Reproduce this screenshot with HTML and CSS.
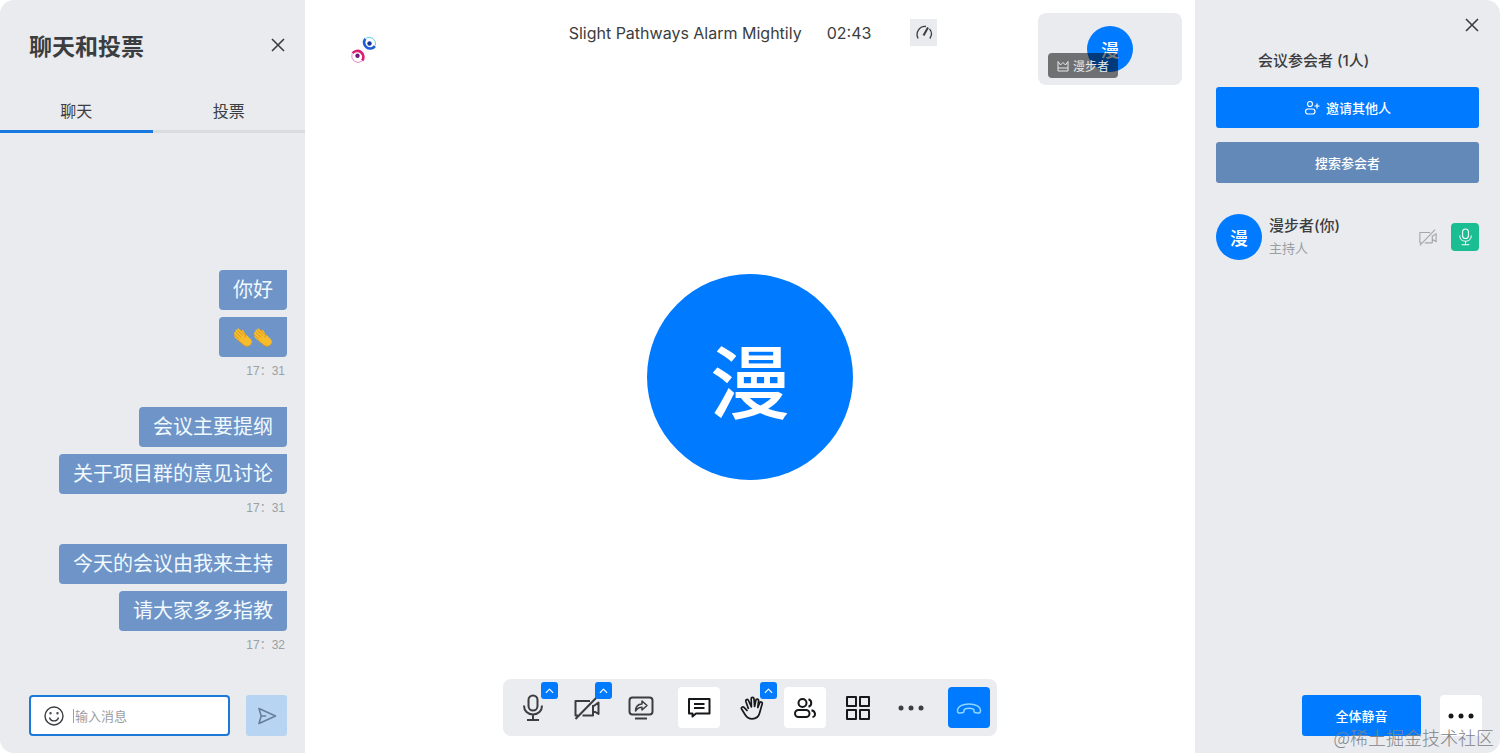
FILE: index.html
```html
<!DOCTYPE html>
<html lang="zh-CN">
<head>
<meta charset="utf-8">
<meta name="viewport" content="width=device-width, initial-scale=1">
<title>Slight Pathways Alarm Mightily</title>
<link rel="stylesheet" href="styles.css">
</head>
<body>
<svg class="defs" aria-hidden="true">
  <symbol id="close" viewBox="0 0 14 14"><path d="M1 1l12 12M13 1L1 13"/></symbol>
  <symbol id="chevron" viewBox="0 0 10 6"><path d="M1 5l4-4 4 4"/></symbol>
  <symbol id="dots" viewBox="0 0 26 6"><circle cx="3" cy="3" r="2.5"/><circle cx="13" cy="3" r="2.5"/><circle cx="23" cy="3" r="2.5"/></symbol>
  <symbol id="mic" viewBox="0 0 20 28"><rect x="5.500" y="1.500" width="9" height="15" rx="4.500"/><path d="M1 11.500c0 5.500 3.800 9 9 9s9-3.500 9-9M10 20.500v5.500M4 26h12"/></symbol>
  <symbol id="camera-off" viewBox="0 0 28 24"><path d="M17 5H2.500v14.500H5M9.500 19.500H20V9M20 10.500l5.500-4V18L20 14.500M2.500 23L24 1"/></symbol>
  <symbol id="clap" viewBox="0 0 20 20">
    <path d="M1.500 7.500c-1-2 .3-2.900 1.300-2.200C1.600 3.300 3 2.200 4.300 3.200 3.800 1.600 5.200.9 6.400 2l2 1.900c.2-1.400 1.700-1.300 2.300-.1l1.500 3 4.900 4.600c1.600 1.600 2.200 3.300 1.300 5l-1.700 2.200c-1.800 1.200-4.300.8-6-.6L3.500 12c-1.800-1.400-2.800-2.500-2-4.500z" fill="#f8bd2b"/>
    <path d="M2.800 5.300l5.400 5.200M4.300 3.200l5.600 5.400M6.400 2l5.200 5M1.500 8l4.700 4.400" fill="none" stroke="#cf8a19" stroke-width=".8"/>
    <path d="M12.200 6.800c.6 1.700.2 3-.6 3.900M5 13.300l5.700 4.700c1.700 1.400 4.200 1.800 6 .6" fill="none" stroke="#d8921c" stroke-width=".9"/>
  </symbol>
</svg>

<div class="app">
  <aside class="panel chat">
    <header class="chat-head">
      <h1>聊天和投票</h1>
      <button class="icon-btn" aria-label="关闭聊天"><svg class="line i14"><use href="#close"/></svg></button>
    </header>
    <nav class="tabs" role="tablist">
      <button class="tab active" role="tab" aria-selected="true">聊天</button>
      <button class="tab" role="tab" aria-selected="false">投票</button>
    </nav>
    <div class="messages">
      <section class="group">
        <p class="bubble">你好</p>
        <p class="bubble emoji" role="img" aria-label="鼓掌"><svg class="i20"><use href="#clap"/></svg><svg class="i20"><use href="#clap"/></svg></p>
        <time>17：31</time>
      </section>
      <section class="group">
        <p class="bubble">会议主要提纲</p>
        <p class="bubble">关于项目群的意见讨论</p>
        <time>17：31</time>
      </section>
      <section class="group">
        <p class="bubble">今天的会议由我来主持</p>
        <p class="bubble">请大家多多指教</p>
        <time>17：32</time>
      </section>
    </div>
    <form class="composer">
      <div class="field">
        <button type="button" class="icon-btn" aria-label="表情">
          <svg class="line i20" viewBox="0 0 20 20"><circle cx="10" cy="10" r="9"/><path d="M5.500 11.500c.7 2.300 2.300 3.400 4.500 3.400s3.800-1.100 4.500-3.400"/><circle cx="6.500" cy="7.300" r=".5"/><circle cx="13.500" cy="7.300" r=".5"/></svg>
        </button>
        <input type="text" placeholder="输入消息" aria-label="输入消息">
      </div>
      <button type="button" class="send" aria-label="发送">
        <svg class="line i20" viewBox="0 0 20 20"><path d="M2 2.500L18.500 10 2 17.500 4.200 10zM4.200 10h5"/></svg>
      </button>
    </form>
  </aside>

  <main class="stage">
    <header class="stage-head">
      <svg class="logo" viewBox="0 0 26 28" aria-label="标志" role="img">
        <g fill="none" stroke-width="2.600">
          <path d="M14.300 2.800a6 6 0 1 0 9.600 7.300" stroke="#1f5fd6"/>
          <path d="M14.800 2.200a6.500 6.500 0 0 1 9.600 7.200" stroke="#5fd0dc" stroke-width="1"/>
          <path d="M1.500 17.300a6 6 0 1 1 9.700 7.300" stroke="#d91f75"/>
          <path d="M1 18a6.500 6.500 0 0 0 9.700 7.400" stroke="#e58ac6" stroke-width="1"/>
        </g>
        <circle cx="18.500" cy="7.500" r="2.200" fill="#1838a0"/><circle cx="6.500" cy="19.800" r="2.200" fill="#71187f"/>
      </svg>
      <div class="meeting">
        <span>Slight Pathways Alarm Mightily</span>
        <time>02:43</time>
        <button class="gauge" aria-label="网络状态">
          <svg class="line i18" viewBox="0 0 18 18"><path d="M3.200 14.500A8 8 0 0 1 11 2.500M14.500 4.800a8 8 0 0 1 .3 9.700"/><path d="M8.500 11.500L13 3.500" class="needle"/></svg>
        </button>
      </div>
      <div class="self-view">
        <span class="avatar">漫</span>
        <span class="tag"><svg class="line i12" viewBox="0 0 12 12"><path d="M1 1.500v9.500h10V1.500L8.500 5 6 2.500 3.500 5zM1 8h10"/></svg>漫步者</span>
      </div>
    </header>
    <div class="avatar big">漫</div>
    <footer class="dock">
      <div class="toolbar">
        <div class="tools wide">
          <button class="tool" aria-label="麦克风"><svg class="line mic"><use href="#mic"/></svg><span class="badge"><svg class="line chev"><use href="#chevron"/></svg></span></button>
          <button class="tool" aria-label="摄像头"><svg class="line cam"><use href="#camera-off"/></svg><span class="badge"><svg class="line chev"><use href="#chevron"/></svg></span></button>
          <button class="tool" aria-label="共享屏幕"><svg class="line i26" viewBox="0 0 26 26"><rect x="1.500" y="2.500" width="23" height="17" rx="3"/><path d="M7 23.500h12"/><path class="thin" d="M7.500 16c.2-4.500 2-6.800 6.500-7V6l5 4.500-5 4.500v-2.700c-2.500 0-4.500.8-6.500 3.700z"/></svg></button>
        </div>
        <div class="tools">
          <button class="tool on" aria-label="聊天"><svg class="line i24" viewBox="0 0 24 24"><path d="M2 3h20.500v14.500H9L5.500 20.500v-3H2zM7 8h10.500M7 12h10.500"/></svg></button>
          <button class="tool dark" aria-label="举手"><svg class="line i24" viewBox="0 0 24 24"><path class="hand" d="M7.500 15L4 11.300c-1.200-1.200-3.200.2-2.400 1.700L5 18.500c1.600 2.800 3.900 4.300 7.200 4.300 4 0 6.500-2.100 7.400-5.800l2.600-9.200c.5-1.900-1.900-2.700-2.600-.9L17.800 11.500l.8-6.700c.2-2-2.400-2.400-2.800-.5L14.600 10.500 14 2.800c-.2-1.900-2.900-1.800-2.800.2l.2 8L8.500 4.500c-.8-1.800-3.200-.9-2.600 1L8.500 13"/></svg><span class="badge"><svg class="line chev"><use href="#chevron"/></svg></span></button>
          <button class="tool on" aria-label="参会者"><svg class="line i24" viewBox="0 0 24 24"><circle cx="9.500" cy="7" r="4"/><rect x="2" y="14" width="14.500" height="7" rx="3.500"/><path d="M15.500 3.200a4 4 0 0 1 0 7.600M18.500 14.300c4.500 1 4.500 6.500 1 6.700"/></svg></button>
          <button class="tool dark" aria-label="布局"><svg class="line i24" viewBox="0 0 24 24"><rect x="1" y="1" width="9" height="9"/><rect x="14" y="1" width="9" height="9"/><rect x="1" y="14" width="9" height="9"/><rect x="14" y="14" width="9" height="9"/></svg></button>
          <button class="tool" aria-label="更多"><svg class="dots"><use href="#dots"/></svg></button>
        </div>
        <button class="tool leave" aria-label="离开会议"><svg class="line i26" viewBox="0 0 26 26"><path d="M1.500 16c-.3-9.500 23.300-9.500 23 0 0 1.600-.9 2.200-2.300 2.100l-2.600-.3c-1.500-.2-1.800-1-1.800-3.400-3-1.400-6.600-1.400-9.600 0 0 2.400-.3 3.200-1.800 3.400l-2.600.3c-1.400.1-2.300-.5-2.300-2.100z"/></svg></button>
      </div>
    </footer>
  </main>

  <aside class="panel people">
    <div class="people-top"><button class="icon-btn" aria-label="关闭参会者"><svg class="line i14"><use href="#close"/></svg></button></div>
    <h2>会议参会者 (1人)</h2>
    <div class="actions">
      <button class="btn"><svg class="line i16" viewBox="0 0 16 16"><circle cx="6" cy="4" r="2.500"/><rect x="1.500" y="9" width="9.500" height="5" rx="2.500"/><path d="M13 3.500v5M10.500 6h5"/></svg>邀请其他人</button>
      <button class="btn search">搜索参会者</button>
    </div>
    <ul class="list">
      <li class="person">
        <span class="avatar">漫</span>
        <div class="who"><strong>漫步者(你)</strong><span>主持人</span></div>
        <svg class="line cam-state"><use href="#camera-off"/></svg>
        <button class="mic-state" aria-label="麦克风已开启"><svg class="line"><use href="#mic"/></svg></button>
      </li>
    </ul>
    <footer class="people-foot">
      <button class="btn mute">全体静音</button>
      <button class="tool on" aria-label="更多选项"><svg class="dots"><use href="#dots"/></svg></button>
    </footer>
    <span class="credit">@稀土掘金技术社区</span>
  </aside>
</div>
</body>
</html>
```
FILE: styles.css
```css
* { box-sizing: border-box; }

:root {
  --blue: #007aff;
  --panel: #e9ebef;
  --ink: #3b3d40;
  --muted: #9b9ea3;
}

body {
  margin: 0;
  background: #fff;
  color: var(--ink);
  font-family: Inter, "Noto Sans CJK SC", sans-serif;
}

h1, h2, p, ul { margin: 0; padding: 0; }

button, input { font: inherit; color: inherit; }

button {
  display: flex;
  align-items: center;
  justify-content: center;
  padding: 0;
  border: 0;
  background: none;
  cursor: pointer;
}

svg { display: block; flex: none; }
.defs { position: absolute; width: 0; height: 0; }

.line {
  fill: none;
  stroke: currentColor;
  stroke-width: 1.6px;
  stroke-linejoin: round;
}

.i12 { width: 12px; height: 12px; }
.i14 { width: 14px; height: 14px; }
.i16 { width: 16px; height: 16px; }
.i18 { width: 18px; height: 18px; }
.i20 { width: 20px; height: 20px; }
.i24 { width: 24px; height: 24px; }
.i26 { width: 26px; height: 26px; }

.app {
  display: grid;
  grid-template-columns: 305px 1fr 305px;
  min-height: 100vh;
}

.panel {
  display: flex;
  flex-direction: column;
  background: var(--panel);
}

/* Chat */
.chat { border-radius: 14px 0 0 14px; }

.chat-head {
  display: flex;
  align-items: center;
  justify-content: space-between;
  height: 90px;
  padding: 0 20px 0 29px;
}

.chat-head h1 { font-size: 23px; font-weight: 600; }

.tabs { display: flex; }

.tab {
  flex: 1;
  height: 43px;
  border-bottom: 3px solid #d9dbde;
  font-size: 16px;
}

.tab.active { border-color: #1778e0; }

.messages {
  display: flex;
  flex: 1;
  flex-direction: column;
  justify-content: flex-end;
  gap: 26px;
  padding: 20px 18px 40px;
}

.group {
  display: flex;
  flex-direction: column;
  align-items: flex-end;
}

.bubble {
  margin-bottom: 7px;
  padding: 0 14px;
  border-radius: 4px 0 4px 4px;
  background: #6f94c8;
  color: #f0faff;
  font-size: 20px;
  line-height: 41px;
  height: 40px;
}

.bubble:nth-last-child(2) { margin-bottom: 4px; }

.emoji { display: flex; align-items: center; }

.group time {
  padding-right: 2px;
  color: var(--muted);
  font-family: "Liberation Sans", "Noto Sans CJK SC", sans-serif;
  font-size: 12px;
  line-height: 20px;
}

.composer {
  display: flex;
  gap: 16px;
  padding: 0 18px 17px 29px;
}

.field {
  display: flex;
  flex: 1;
  align-items: center;
  gap: 9px;
  min-width: 0;
  height: 41px;
  padding: 0 13px;
  border: 2px solid #1b7ad9;
  border-radius: 4px;
  background: #fff;
}

.field .line { stroke-width: 1.4px; }

.field input {
  width: 100%;
  min-width: 0;
  height: 14px;
  padding: 0 0 0 1px;
  border: 0;
  border-left: 1px solid #a0a0a0;
  outline: 0;
  background: none;
  font-size: 13px;
}

.field input::placeholder { color: var(--muted); opacity: 1; }

.send {
  width: 41px;
  height: 41px;
  border-radius: 3px;
  background: #b7d4f3;
  color: #667f9c;
}

/* Stage */
.stage {
  display: grid;
  grid-template-rows: 1fr auto 1fr;
  justify-items: center;
}

.stage-head {
  display: grid;
  grid-template-columns: 1fr auto 1fr;
  align-items: start;
  width: 100%;
  padding: 13px 13px 0 46px;
}

.logo { width: 26px; height: 28px; margin-top: 23px; }

.meeting {
  display: flex;
  align-items: center;
  margin-top: 6px;
  margin-right: 27px;
  font-size: 16px;
}

.meeting time { margin: 0 39px 0 25px; }

.gauge {
  width: 27px;
  height: 27px;
  background: #e9ebee;
}

.gauge .line { stroke-width: 1.3px; }
.gauge .needle { stroke-width: 2px; }

.self-view {
  position: relative;
  display: flex;
  align-items: center;
  justify-content: center;
  justify-self: end;
  width: 144px;
  height: 72px;
  border-radius: 8px;
  background: var(--panel);
}

.avatar {
  display: flex;
  flex: none;
  align-items: center;
  justify-content: center;
  width: 46px;
  height: 46px;
  border-radius: 50%;
  background: var(--blue);
  color: #fff;
  font-size: 18px;
  font-weight: 500;
}

.avatar.big {
  width: 206px;
  height: 206px;
  font-size: 80px;
}

.tag {
  position: absolute;
  bottom: 7px;
  left: 10px;
  display: flex;
  align-items: center;
  gap: 4px;
  height: 25px;
  padding: 0 9px;
  border-radius: 4px;
  background: rgba(0, 0, 0, .52);
  color: #e8eaec;
  font-size: 12px;
}

.tag .line { stroke-width: 1px; }

.dock {
  display: flex;
  align-items: flex-end;
  padding-bottom: 17px;
}

.toolbar {
  display: flex;
  gap: 16px;
  padding: 8px 7px 8px 9px;
  border-radius: 8px;
  background: #ebecef;
}

.tools { display: flex; gap: 11px; }
.tools.wide { gap: 12px; }

.tool {
  position: relative;
  width: 42px;
  height: 41px;
  border-radius: 4px;
}

.tool .line { stroke-width: 2px; }
.tool .thin { stroke-width: 1.5px; }
.tool .hand { stroke-width: 1.7px; }
.tool.on { background: #fff; color: #17181a; }
.tool.dark { color: #17181a; }
.tool.leave { background: var(--blue); color: #8fd8ff; }
.tool.leave .line { stroke-width: 1.5px; }

.mic { width: 20px; height: 28px; }
.cam { width: 28px; height: 24px; }
.dots { width: 26px; height: 6px; fill: currentColor; }

.badge {
  position: absolute;
  top: -5px;
  right: -4px;
  display: flex;
  align-items: center;
  justify-content: center;
  width: 17px;
  height: 17px;
  border-radius: 3px;
  background: var(--blue);
  color: #fff;
}

.tool .chev { width: 9px; height: 6px; stroke-width: 1.3px; }

/* Participants */
.people {
  position: relative;
  padding: 0 21px 17px;
  border-radius: 0 14px 14px 0;
}

.people-top {
  display: flex;
  justify-content: flex-end;
  height: 50px;
}

.people h2 {
  padding-left: 42px;
  font-size: 15px;
  font-weight: 500;
  line-height: 21px;
}

.actions {
  display: flex;
  flex-direction: column;
  gap: 14px;
  margin-top: 16px;
}

.btn {
  gap: 6px;
  height: 41px;
  border-radius: 3px;
  background: var(--blue);
  color: #fff;
  font-size: 13px;
  font-weight: 500;
}

.btn .line { stroke-width: 1.2px; }
.btn.search { background: #6289b7; }

.list { flex: 1; margin-top: 31px; list-style: none; }

.person { display: flex; align-items: center; }

.who {
  display: flex;
  flex: 1;
  flex-direction: column;
  margin-left: 7px;
}

.who strong { font-size: 15px; font-weight: 500; line-height: 22px; }
.who span { color: var(--muted); font-size: 13px; line-height: 22px; }

.cam-state { width: 20px; height: 17px; color: #a4a7ab; }

.mic-state {
  width: 28px;
  height: 28px;
  margin-left: 13px;
  border-radius: 4px;
  background: #1bbd92;
  color: #fff;
}

.mic-state .line { width: 13px; height: 18px; }

.people-foot {
  display: flex;
  justify-content: flex-end;
  gap: 19px;
  margin-right: -3px;
}

.mute { width: 119px; }

.credit {
  position: absolute;
  right: 6px;
  bottom: 4px;
  color: #808489;
  font-family: "Noto Sans CJK SC", sans-serif;
  font-size: 18px;
  font-weight: 300;
  line-height: 24px;
}
```
